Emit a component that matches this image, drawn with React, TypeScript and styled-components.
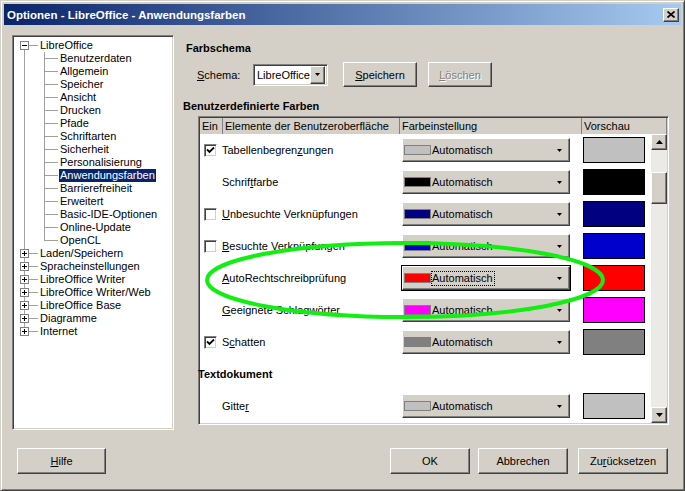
import React from "react";
import styled, { createGlobalStyle, css } from "styled-components";

const GlobalStyle = createGlobalStyle`
  html, body {
    margin: 0;
    padding: 0;
    background: #d4d0c8;
  }
  body {
    font-family: "Liberation Sans", Arial, sans-serif;
    font-size: 11px;
    color: #000;
  }
`;

const raised = css`
  background: #d4d0c8;
  border: 1px solid;
  border-color: #fff #404040 #404040 #fff;
  box-shadow: inset -1px -1px #808080;
  box-sizing: border-box;
`;

const sunken = css`
  border: 1px solid;
  border-color: #808080 #fff #fff #808080;
  box-shadow: inset 1px 1px #404040, inset -1px -1px #d4d0c8;
  box-sizing: border-box;
`;

type TreeItem = {
  label: string;
  level: 0 | 1;
  open?: boolean;
  selected?: boolean;
  first?: boolean;
  last?: boolean;
};

const treeItems: TreeItem[] = [
  { label: "LibreOffice", level: 0, open: true, first: true },
  { label: "Benutzerdaten", level: 1 },
  { label: "Allgemein", level: 1 },
  { label: "Speicher", level: 1 },
  { label: "Ansicht", level: 1 },
  { label: "Drucken", level: 1 },
  { label: "Pfade", level: 1 },
  { label: "Schriftarten", level: 1 },
  { label: "Sicherheit", level: 1 },
  { label: "Personalisierung", level: 1 },
  { label: "Anwendungsfarben", level: 1, selected: true },
  { label: "Barrierefreiheit", level: 1 },
  { label: "Erweitert", level: 1 },
  { label: "Basic-IDE-Optionen", level: 1 },
  { label: "Online-Update", level: 1 },
  { label: "OpenCL", level: 1, last: true },
  { label: "Laden/Speichern", level: 0 },
  { label: "Spracheinstellungen", level: 0 },
  { label: "LibreOffice Writer", level: 0 },
  { label: "LibreOffice Writer/Web", level: 0 },
  { label: "LibreOffice Base", level: 0 },
  { label: "Diagramme", level: 0 },
  { label: "Internet", level: 0, last: true },
];

type ColorRow =
  | { section: string }
  | {
      check: boolean | null;
      label: React.ReactNode;
      color: string;
      focused?: boolean;
    };

const Acc = styled.span`
  text-decoration: underline;
`;

const colorRows: ColorRow[] = [
  { check: true, label: <>Tabellenbegren<Acc>z</Acc>ungen</>, color: "#c0c0c0" },
  { check: null, label: <>Schrif<Acc>t</Acc>farbe</>, color: "#000000" },
  { check: false, label: <><Acc>U</Acc>nbesuchte Verknüpfungen</>, color: "#000080" },
  { check: false, label: <><Acc>B</Acc>esuchte Verknüpfungen</>, color: "#0000cc" },
  { check: null, label: <><Acc>A</Acc>utoRechtschreibprüfung</>, color: "#ff0000", focused: true },
  { check: null, label: <><Acc>G</Acc>eeignete Schlagwörter</>, color: "#ff00ff" },
  { check: true, label: <>S<Acc>c</Acc>hatten</>, color: "#808080" },
  { section: "Textdokument" },
  { check: null, label: <>Gitte<Acc>r</Acc></>, color: "#c0c0c0" },
];

const TreeGuide = ({ item }: { item: TreeItem }) => {
  const line = "#a0a0a0";
  if (item.level === 0) {
    const top = item.first ? 11 : 0;
    const bottom = item.last ? 2 : 13;
    return (
      <svg width="26" height="13" style={{ flex: "none" }}>
        <line x1="10.5" y1={top} x2="10.5" y2={bottom} stroke={line} />
        <line x1="15" y1="6.5" x2="24" y2="6.5" stroke={line} />
        <rect x="6.5" y="2.5" width="8" height="8" fill="#fff" stroke="#808080" />
        <line x1="8" y1="6.5" x2="13" y2="6.5" stroke="#000" />
        {!item.open && <line x1="10.5" y1="4" x2="10.5" y2="9" stroke="#000" />}
      </svg>
    );
  }
  return (
    <svg width="46" height="13" style={{ flex: "none" }}>
      <line x1="10.5" y1="0" x2="10.5" y2="13" stroke={line} />
      <line x1="30.5" y1="0" x2="30.5" y2={item.last ? 7 : 13} stroke={line} />
      <line x1="30" y1="6.5" x2="44" y2="6.5" stroke={line} />
    </svg>
  );
};

const CheckBox = ({ checked }: { checked: boolean }) => (
  <Box>
    {checked && (
      <svg width="9" height="9" viewBox="0 0 9 9">
        <path d="M1 3.5 L3.5 6 L8 1.5" stroke="#000" strokeWidth="1.8" fill="none" />
      </svg>
    )}
  </Box>
);

const DownArrow = () => (
  <svg width="5" height="3" viewBox="0 0 5 3" style={{ flex: "none" }}>
    <polygon points="0,0 5,0 2.5,3" fill="#000" />
  </svg>
);

const App = () => (
  <>
    <GlobalStyle />
    <Window>
      <TitleBar>
        <Title>Optionen - LibreOffice - Anwendungsfarben</Title>
        <CloseButton>
          <svg width="8" height="7" viewBox="0 0 8 7">
            <path d="M0.5 0.5 L7.5 6.5 M7.5 0.5 L0.5 6.5" stroke="#000" strokeWidth="1.7" />
          </svg>
        </CloseButton>
      </TitleBar>
      <Content>
        <Main>
          <TreePanel>
            {treeItems.map((item) => (
              <TreeRow key={item.label}>
                <TreeGuide item={item} />
                <TreeLabel $selected={item.selected}>{item.label}</TreeLabel>
              </TreeRow>
            ))}
          </TreePanel>
          <RightPanel>
            <SectionTitle>Farbschema</SectionTitle>
            <SchemaRow>
              <SchemaLabel>
                <Acc>S</Acc>chema:
              </SchemaLabel>
              <Combo>
                <ComboText>LibreOffice</ComboText>
                <ComboButton>
                  <DownArrow />
                </ComboButton>
              </Combo>
              <PushButton $width={74} $gap={15}>
                <Acc>S</Acc>peichern
              </PushButton>
              <PushButton $width={64} $gap={11} $disabled>
                <Acc>L</Acc>öschen
              </PushButton>
            </SchemaRow>
            <SectionTitle $shift={-3} $top={13}>
              Benutzerdefinierte Farben
            </SectionTitle>
            <TableFrame>
              <HeaderRow>
                <HeaderCell>Ein</HeaderCell>
                <HeaderCell>Elemente der Benutzeroberfläche</HeaderCell>
                <HeaderCell>Farbeinstellung</HeaderCell>
                <HeaderCell>Vorschau</HeaderCell>
              </HeaderRow>
              <TableBody>
                <Rows>
                  {colorRows.map((row, i) =>
                    "section" in row ? (
                      <SectionRow key={i}>{row.section}</SectionRow>
                    ) : (
                      <Row key={i}>
                        <CheckCell>
                          {row.check !== null && <CheckBox checked={row.check} />}
                        </CheckCell>
                        <RowLabel>{row.label}</RowLabel>
                        <ColorDrop $focused={row.focused}>
                          <Swatch style={{ background: row.color }} />
                          <DropText $focused={row.focused}>Automatisch</DropText>
                          <DropArrow>
                            <DownArrow />
                          </DropArrow>
                        </ColorDrop>
                        <Preview style={{ background: row.color }} />
                      </Row>
                    )
                  )}
                </Rows>
                <ScrollBar>
                  <ScrollButton>
                    <svg width="7" height="4" viewBox="0 0 7 4">
                      <polygon points="0,4 7,4 3.5,0" fill="#000" />
                    </svg>
                  </ScrollButton>
                  <ScrollTrack>
                    <Thumb />
                  </ScrollTrack>
                  <ScrollButton>
                    <svg width="7" height="4" viewBox="0 0 7 4">
                      <polygon points="0,0 7,0 3.5,4" fill="#000" />
                    </svg>
                  </ScrollButton>
                </ScrollBar>
              </TableBody>
            </TableFrame>
          </RightPanel>
        </Main>
        <Footer>
          <PushButton $width={89} $height={26}>
            <Acc>H</Acc>ilfe
          </PushButton>
          <Spacer />
          <PushButton $width={80} $height={26}>
            OK
          </PushButton>
          <PushButton $width={90} $height={26} $gap={8}>
            Abbrechen
          </PushButton>
          <PushButton $width={90} $height={26} $gap={10}>
            Zu<Acc>r</Acc>ücksetzen
          </PushButton>
        </Footer>
      </Content>
      <Annotation width="685" height="491">
        <ellipse cx="405" cy="280" rx="198" ry="37" fill="none" stroke="#12ee12" strokeWidth="4" />
      </Annotation>
    </Window>
  </>
);

export default App;

const Window = styled.div`
  position: relative;
  width: 685px;
  height: 491px;
  box-sizing: border-box;
  background: #d4d0c8;
  border: 1px solid;
  border-color: #d4d0c8 #404040 #404040 #d4d0c8;
  box-shadow: inset 1px 1px #fff, inset -1px -1px #808080;
  padding: 3px;
  display: flex;
  flex-direction: column;
  overflow: hidden;
`;

const TitleBar = styled.div`
  height: 21px;
  flex: none;
  display: flex;
  align-items: center;
  padding: 0 2px 0 3px;
  background: linear-gradient(to right, #0a246a, #a6caf0);
`;

const Title = styled.div`
  flex: 1;
  color: #fff;
  font-weight: bold;
  font-size: 11.5px;
  white-space: nowrap;
`;

const CloseButton = styled.div`
  ${raised};
  width: 16px;
  height: 14px;
  display: flex;
  align-items: center;
  justify-content: center;
`;

const Content = styled.div`
  flex: 1;
  display: flex;
  flex-direction: column;
  padding: 10px 12px 0 8px;
`;

const Main = styled.div`
  display: flex;
  gap: 12px;
  height: 395px;
`;

const TreePanel = styled.div`
  ${sunken};
  width: 162px;
  height: 395px;
  background: #fff;
  padding: 3px 0 0 1px;
  display: flex;
  flex-direction: column;
`;

const TreeRow = styled.div`
  display: flex;
  align-items: center;
  height: 13px;
`;

const TreeLabel = styled.span<{ $selected?: boolean }>`
  line-height: 13px;
  white-space: nowrap;
  padding: 0 1px;
  margin-left: -1px;
  ${(p) =>
    p.$selected &&
    css`
      background: #0a246a;
      color: #fff;
    `}
`;

const RightPanel = styled.div`
  flex: 1;
  display: flex;
  flex-direction: column;
`;

const SectionTitle = styled.div<{ $shift?: number; $top?: number }>`
  font-weight: bold;
  line-height: 13px;
  margin-top: ${(p) => p.$top ?? 7}px;
  margin-left: ${(p) => p.$shift ?? 0}px;
`;

const SchemaRow = styled.div`
  display: flex;
  align-items: center;
  height: 25px;
  margin-top: 7px;
  padding-left: 11px;
`;

const SchemaLabel = styled.span`
  width: 56px;
`;

const Combo = styled.div`
  ${sunken};
  width: 75px;
  height: 22px;
  background: #fff;
  display: flex;
  align-items: center;
  padding: 2px;
`;

const ComboText = styled.span`
  flex: 1;
  padding-left: 1px;
`;

const ComboButton = styled.div`
  ${raised};
  width: 16px;
  height: 18px;
  display: flex;
  align-items: center;
  justify-content: center;
`;

const PushButton = styled.div<{
  $width: number;
  $height?: number;
  $gap?: number;
  $disabled?: boolean;
}>`
  ${raised};
  width: ${(p) => p.$width}px;
  height: ${(p) => p.$height ?? 25}px;
  margin-left: ${(p) => p.$gap ?? 0}px;
  display: flex;
  align-items: center;
  justify-content: center;
  ${(p) =>
    p.$disabled &&
    css`
      color: #808080;
      text-shadow: 1px 1px #fff;
    `}
`;

const TableFrame = styled.div`
  ${sunken};
  margin: 3px 0 0 12px;
  width: 471px;
  height: 309px;
  padding: 1px;
  display: flex;
  flex-direction: column;
`;

const HeaderRow = styled.div`
  display: grid;
  grid-template-columns: 23px 177px 182px 85px;
  height: 16px;
  background: #d4d0c8;
`;

const HeaderCell = styled.div`
  border-right: 1px solid #808080;
  padding-left: 2px;
  line-height: 16px;
  white-space: nowrap;
  overflow: hidden;
`;

const TableBody = styled.div`
  flex: 1;
  display: flex;
  background: #fff;
`;

const Rows = styled.div`
  width: 451px;
  display: flex;
  flex-direction: column;
`;

const Row = styled.div`
  height: 32px;
  display: grid;
  grid-template-columns: 22px 180px 181px 62px;
  align-items: center;
`;

const SectionRow = styled.div`
  height: 32px;
  line-height: 32px;
  font-weight: bold;
  margin-left: -2px;
`;

const CheckCell = styled.div`
  padding-left: 4px;
  display: flex;
  align-items: center;
`;

const Box = styled.div`
  ${sunken};
  width: 13px;
  height: 13px;
  background: #fff;
  display: flex;
  align-items: center;
  justify-content: center;
`;

const RowLabel = styled.div`
  white-space: nowrap;
`;

const ColorDrop = styled.div<{ $focused?: boolean }>`
  ${raised};
  width: 168px;
  height: 24px;
  display: flex;
  align-items: center;
  padding: 0 7px 0 1px;
  ${(p) =>
    p.$focused &&
    css`
      outline: 1px solid #000;
    `}
`;

const Swatch = styled.div`
  width: 27px;
  height: 10px;
  box-sizing: border-box;
  border: 1px solid #808080;
  flex: none;
`;

const DropText = styled.span<{ $focused?: boolean }>`
  margin-left: 1px;
  padding: 0 1px 0 0;
  line-height: 13px;
  ${(p) =>
    p.$focused &&
    css`
      outline: 1px dotted #000;
    `}
`;

const DropArrow = styled.span`
  margin-left: auto;
  display: flex;
`;

const Preview = styled.div`
  width: 62px;
  height: 26px;
  box-sizing: border-box;
  border: 1px solid #000;
`;

const ScrollBar = styled.div`
  width: 16px;
  display: flex;
  flex-direction: column;
  background: #eceae6;
`;

const ScrollButton = styled.div`
  ${raised};
  width: 16px;
  height: 16px;
  display: flex;
  align-items: center;
  justify-content: center;
`;

const ScrollTrack = styled.div`
  flex: 1;
`;

const Thumb = styled.div`
  ${raised};
  margin-top: 22px;
  height: 32px;
`;

const Footer = styled.div`
  display: flex;
  align-items: center;
  margin-top: 18px;
  padding: 0 1px 0 5px;
`;

const Spacer = styled.div`
  flex: 1;
`;

const Annotation = styled.svg`
  position: absolute;
  left: -1px;
  top: -1px;
  pointer-events: none;
`;
